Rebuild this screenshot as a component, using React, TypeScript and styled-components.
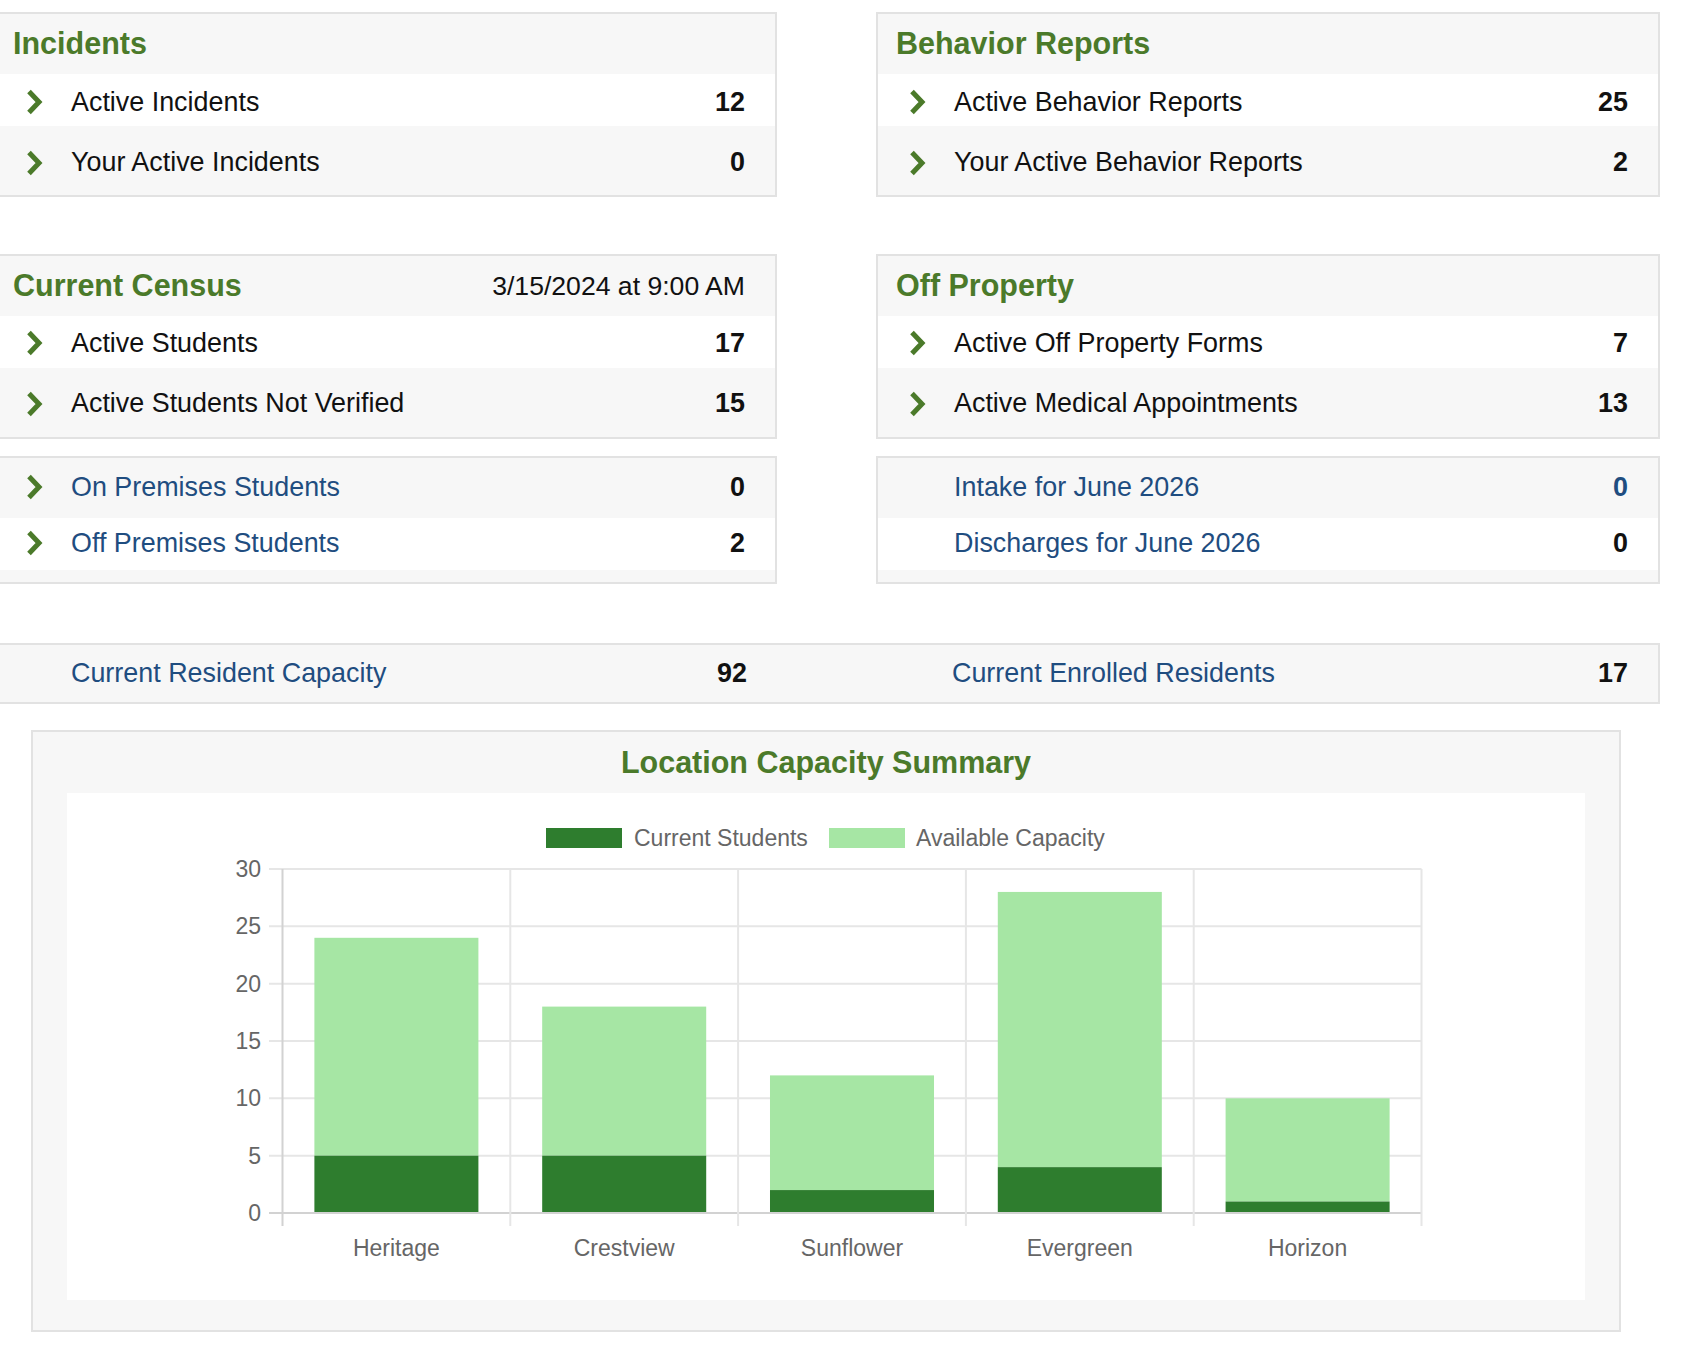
import styled, { createGlobalStyle } from 'styled-components';

const COLORS = {
  green: '#4b7a2a',
  blue: '#1f4d80',
  text: '#111',
  panel: '#f7f7f7',
  border: '#e2e2e2',
  barDark: '#2e7d2e',
  barLight: '#a6e6a4',
  grid: '#e6e6e6',
  axis: '#d2d2d2',
  tick: '#666',
};

const GlobalStyle = createGlobalStyle`
  body {
    margin: 0;
    background: #fff;
    overflow-x: hidden;
    font-family: 'Liberation Sans', Arial, Helvetica, sans-serif;
    color: ${COLORS.text};
  }
`;

const Page = styled.div`
  margin: 12px 22px 0 -7px;
`;

const TopGrid = styled.div`
  display: grid;
  grid-template-columns: 1fr 1fr;
  column-gap: 99px;
`;

const Column = styled.div`
  display: flex;
  flex-direction: column;
  gap: 57px;
`;

const Group = styled.div`
  display: flex;
  flex-direction: column;
  gap: 17px;
`;

const Panel = styled.section<{ $padBottom?: number }>`
  background: ${COLORS.panel};
  border: 2px solid ${COLORS.border};
  padding-bottom: ${(p) => p.$padBottom ?? 0}px;
`;

const Header = styled.div`
  height: 60px;
  display: flex;
  align-items: center;
  justify-content: space-between;
  padding: 0 30px 0 18px;
`;

const Title = styled.h2`
  margin: 0 0 2px;
  font-size: 30.5px;
  font-weight: 700;
  color: ${COLORS.green};
`;

const DateStamp = styled.span`
  font-size: 26.6px;
`;

// $nudge > 0 pushes the content down, < 0 lifts it
const Row = styled.div<{ $h: number; $white?: boolean; $nudge: number }>`
  display: grid;
  grid-template-columns: 76px 1fr auto;
  align-items: center;
  height: ${(p) => p.$h}px;
  box-sizing: border-box;
  padding: ${(p) => Math.max(p.$nudge, 0)}px 30px ${(p) => Math.max(-p.$nudge, 0)}px 0;
  background: ${(p) => (p.$white ? '#fff' : 'transparent')};
`;

const ChevronCell = styled.span`
  display: flex;
  padding-left: 31px;
`;

const Label = styled.a<{ $link?: boolean }>`
  font-size: 26.9px;
  text-decoration: none;
  cursor: pointer;
  color: ${(p) => (p.$link ? COLORS.blue : COLORS.text)};
`;

const Count = styled.span<{ $link?: boolean }>`
  font-size: 26.9px;
  font-weight: 700;
  color: ${(p) => (p.$link ? COLORS.blue : COLORS.text)};
`;

const CapacityBar = styled.div`
  margin-top: 59px;
  height: 57px;
  background: ${COLORS.panel};
  border: 2px solid ${COLORS.border};
  display: grid;
  grid-template-columns: 1fr 1fr;
  column-gap: 99px;
  align-items: center;
`;

const CapacityCell = styled.div`
  display: grid;
  grid-template-columns: 76px 1fr auto;
  align-items: center;
  padding-right: 30px;
`;

const ChartPanel = styled.section`
  margin: 26px 39px 0 38px;
  background: ${COLORS.panel};
  border: 2px solid ${COLORS.border};
  padding: 0 34px 30px;
`;

const ChartTitle = styled.h3`
  margin: 0;
  height: 61px;
  display: flex;
  align-items: center;
  justify-content: center;
  font-size: 30.5px;
  font-weight: 700;
  color: ${COLORS.green};
`;

const ChartCanvas = styled.div`
  background: #fff;
  height: 507px;

  svg {
    display: block;
    font-family: 'Liberation Sans', Arial, Helvetica, sans-serif;
  }
`;

type Item = { label: string; count: number; chevron?: boolean; link?: boolean; countLink?: boolean; h: number; white?: boolean };

const Chevron = () => (
  <svg width="18" height="26" viewBox="0 0 18 26">
    <path d="M3 2.6 L13 13 L3 23.4" fill="none" stroke={COLORS.green} strokeWidth="5" />
  </svg>
);

const ItemRow = ({ item, nudge }: { item: Item; nudge: number }) => (
  <Row $h={item.h} $white={item.white} $nudge={nudge}>
    <ChevronCell>{item.chevron !== false && <Chevron />}</ChevronCell>
    <Label $link={item.link}>{item.label}</Label>
    <Count $link={item.countLink}>{item.count}</Count>
  </Row>
);

type StatPanelProps = { title?: string; date?: string; items: Item[]; padBottom?: number; nudge?: number };

const StatPanel = ({ title, date, items, padBottom, nudge = 4 }: StatPanelProps) => (
  <Panel $padBottom={padBottom}>
    {title && (
      <Header>
        <Title>{title}</Title>
        {date && <DateStamp>{date}</DateStamp>}
      </Header>
    )}
    {items.map((it) => (
      <ItemRow key={it.label} item={it} nudge={nudge} />
    ))}
  </Panel>
);

const locations = [
  { name: 'Heritage', current: 5, capacity: 24 },
  { name: 'Crestview', current: 5, capacity: 18 },
  { name: 'Sunflower', current: 2, capacity: 12 },
  { name: 'Evergreen', current: 4, capacity: 28 },
  { name: 'Horizon', current: 1, capacity: 10 },
];

// plot geometry, in px inside the white canvas
const W = 1518;
const H = 507;
const LEFT = 215.5;
const RIGHT = 1354.5;
const ZERO = 420;
const PER_UNIT = 344 / 30;
const CAT = (RIGHT - LEFT) / locations.length;
const BAR = CAT * 0.72;
const yOf = (v: number) => ZERO - v * PER_UNIT;

const CapacityChart = () => (
  <svg width="100%" height={H} viewBox={`0 0 ${W} ${H}`}>
    {/* legend */}
    <rect x={479} y={35} width={76} height={20} fill={COLORS.barDark} />
    <text x={567} y={45} fontSize={23} fill={COLORS.tick} dominantBaseline="central">
      Current Students
    </text>
    <rect x={762} y={35} width={76} height={20} fill={COLORS.barLight} />
    <text x={849} y={45} fontSize={23} fill={COLORS.tick} dominantBaseline="central">
      Available Capacity
    </text>

    {/* horizontal grid + y ticks */}
    {[0, 5, 10, 15, 20, 25, 30].map((v) => (
      <g key={v}>
        <line x1={202} x2={RIGHT} y1={yOf(v)} y2={yOf(v)} stroke={v === 0 ? COLORS.axis : COLORS.grid} strokeWidth={2} />
        <text x={194} y={yOf(v)} fontSize={23} fill={COLORS.tick} textAnchor="end" dominantBaseline="central">
          {v}
        </text>
      </g>
    ))}

    {/* vertical grid between categories */}
    {locations.concat([locations[0]]).map((_, i) => (
      <line
        key={i}
        x1={LEFT + i * CAT}
        x2={LEFT + i * CAT}
        y1={yOf(30)}
        y2={ZERO + 13}
        stroke={i === 0 ? COLORS.axis : COLORS.grid}
        strokeWidth={2}
      />
    ))}

    {/* stacked bars */}
    {locations.map((loc, i) => {
      const x = LEFT + i * CAT + (CAT - BAR) / 2;
      return (
        <g key={loc.name}>
          <rect x={x} y={yOf(loc.capacity)} width={BAR} height={(loc.capacity - loc.current) * PER_UNIT} fill={COLORS.barLight} />
          <rect x={x} y={yOf(loc.current)} width={BAR} height={loc.current * PER_UNIT - 1} fill={COLORS.barDark} />
          <text x={LEFT + i * CAT + CAT / 2} y={455} fontSize={23} fill={COLORS.tick} textAnchor="middle" dominantBaseline="central">
            {loc.name}
          </text>
        </g>
      );
    })}
  </svg>
);

export default function App() {
  return (
    <>
      <GlobalStyle />
      <Page>
        <TopGrid>
          <Column>
            <StatPanel
              title="Incidents"
              items={[
                { label: 'Active Incidents', count: 12, h: 52, white: true },
                { label: 'Your Active Incidents', count: 0, h: 69 },
              ]}
            />
            <Group>
              <StatPanel
                title="Current Census"
                date="3/15/2024 at 9:00 AM"
                nudge={2}
                items={[
                  { label: 'Active Students', count: 17, h: 52, white: true },
                  { label: 'Active Students Not Verified', count: 15, h: 69 },
                ]}
              />
              <StatPanel
                padBottom={12}
                nudge={-2}
                items={[
                  { label: 'On Premises Students', count: 0, h: 60, link: true },
                  { label: 'Off Premises Students', count: 2, h: 52, white: true, link: true },
                ]}
              />
            </Group>
          </Column>
          <Column>
            <StatPanel
              title="Behavior Reports"
              items={[
                { label: 'Active Behavior Reports', count: 25, h: 52, white: true },
                { label: 'Your Active Behavior Reports', count: 2, h: 69 },
              ]}
            />
            <Group>
              <StatPanel
                title="Off Property"
                nudge={2}
                items={[
                  { label: 'Active Off Property Forms', count: 7, h: 52, white: true },
                  { label: 'Active Medical Appointments', count: 13, h: 69 },
                ]}
              />
              <StatPanel
                padBottom={12}
                nudge={-2}
                items={[
                  { label: 'Intake for June 2026', count: 0, h: 60, link: true, countLink: true, chevron: false },
                  { label: 'Discharges for June 2026', count: 0, h: 52, white: true, link: true, chevron: false },
                ]}
              />
            </Group>
          </Column>
        </TopGrid>

        <CapacityBar>
          <CapacityCell>
            <span />
            <Label $link>Current Resident Capacity</Label>
            <Count>92</Count>
          </CapacityCell>
          <CapacityCell>
            <span />
            <Label $link>Current Enrolled Residents</Label>
            <Count>17</Count>
          </CapacityCell>
        </CapacityBar>

        <ChartPanel>
          <ChartTitle>Location Capacity Summary</ChartTitle>
          <ChartCanvas>
            <CapacityChart />
          </ChartCanvas>
        </ChartPanel>
      </Page>
    </>
  );
}
